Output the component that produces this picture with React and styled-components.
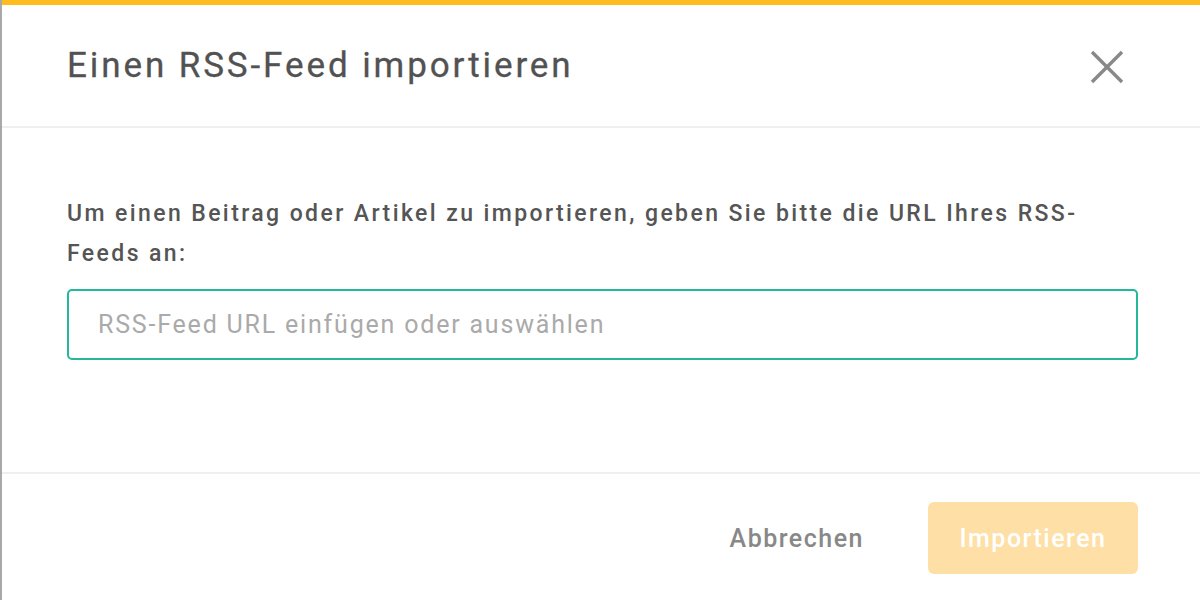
import React, { useState } from "react";
import styled, { createGlobalStyle } from "styled-components";

const GlobalStyle = createGlobalStyle`
  html, body {
    margin: 0;
    padding: 0;
    height: 100%;
    background: #a9a9a9;
    font-family: Roboto, "Noto Sans", "Liberation Sans", sans-serif;
  }
  #root {
    height: 100%;
  }
`;

const Modal = styled.div`
  margin-left: 2px;
  height: 600px;
  box-sizing: border-box;
  background: #fff;
  border-top: 5px solid #ffbc1f;
  display: flex;
  flex-direction: column;
`;

const Header = styled.div`
  flex: 0 0 123px;
  box-sizing: border-box;
  border-bottom: 2px solid #efefef;
  display: flex;
  align-items: center;
  justify-content: space-between;
  padding: 0 76px 0 65px;
`;

const Title = styled.h2`
  margin: 0;
  font-size: 35px;
  font-weight: 400;
  color: #525252;
  letter-spacing: 2.9px;
  -webkit-text-stroke: 0.3px #525252;
`;

const CloseButton = styled.button`
  border: none;
  background: none;
  padding: 0;
  width: 34px;
  height: 34px;
  margin-top: 2px;
  cursor: pointer;
  display: flex;
  align-items: center;
  justify-content: center;
`;

const Body = styled.div`
  flex: 0 0 346px;
  box-sizing: border-box;
  border-bottom: 2px solid #efefef;
  padding: 66px 62px 0 65px;
`;

const Prompt = styled.p`
  margin: 0 0 15px;
  font-size: 23px;
  line-height: 40px;
  font-weight: 500;
  color: #555;
  letter-spacing: 2.4px;
`;

const UrlInput = styled.input`
  display: block;
  width: 100%;
  height: 71px;
  box-sizing: border-box;
  border: 2px solid #22b899;
  border-radius: 5px;
  padding: 0 29px;
  font-family: inherit;
  font-size: 25px;
  letter-spacing: 1.8px;
  color: #555;
  outline: none;
  caret-color: #333;

  &::placeholder {
    color: #aaa;
  }
`;

const Footer = styled.div`
  flex: 1;
  display: flex;
  align-items: center;
  justify-content: flex-end;
  gap: 64px;
  padding: 2px 62px 0 65px;
`;

const TextButton = styled.button`
  border: none;
  background: none;
  padding: 0;
  font-family: inherit;
  font-size: 25px;
  font-weight: 500;
  letter-spacing: 1.5px;
  color: #888;
  cursor: pointer;
`;

const PrimaryButton = styled.button`
  border: none;
  width: 210px;
  height: 72px;
  border-radius: 6px;
  background: ${(p) => (p.disabled ? "#fee0a6" : "#ffbc1f")};
  color: #fff;
  font-family: inherit;
  font-size: 25px;
  font-weight: 500;
  letter-spacing: 1.5px;
  cursor: ${(p) => (p.disabled ? "default" : "pointer")};
`;

const App = () => {
  const [url, setUrl] = useState("");

  return (
    <>
      <GlobalStyle />
      <Modal>
        <Header>
          <Title>Einen RSS-Feed importieren</Title>
          <CloseButton aria-label="Schließen">
            <svg width="34" height="34" viewBox="0 0 34 34">
              <line x1="2" y1="2" x2="32" y2="32" stroke="#888" strokeWidth="3.4" />
              <line x1="32" y1="2" x2="2" y2="32" stroke="#888" strokeWidth="3.4" />
            </svg>
          </CloseButton>
        </Header>
        <Body>
          <Prompt>
            Um einen Beitrag oder Artikel zu importieren, geben Sie bitte die URL Ihres RSS-Feeds an:
          </Prompt>
          <UrlInput
            autoFocus
            value={url}
            onChange={(e) => setUrl(e.target.value)}
            placeholder="RSS-Feed URL einfügen oder auswählen"
          />
        </Body>
        <Footer>
          <TextButton>Abbrechen</TextButton>
          <PrimaryButton disabled={!url}>Importieren</PrimaryButton>
        </Footer>
      </Modal>
    </>
  );
};

export default App;
